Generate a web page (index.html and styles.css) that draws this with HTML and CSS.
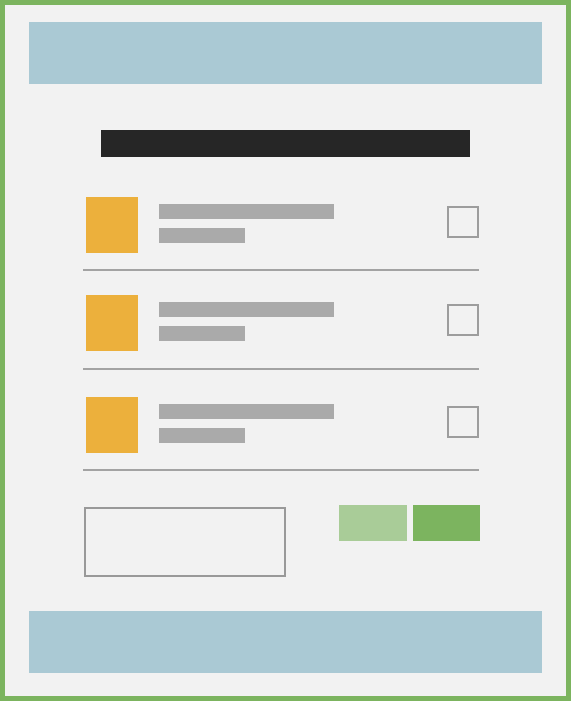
FILE: index.html
```html
<!DOCTYPE html>
<html lang="en">
    <head>
        <title>Checklist</title>
        <link rel="stylesheet" href="styles.css">
    </head>
    <body>
        <div class="frame">
            <div class="band"></div>

            <div class="title"></div>

            <div class="list">
                <div class="row">
                    <div class="thumb"></div>
                    <div class="lines">
                        <div class="line long"></div>
                        <div class="line short"></div>
                    </div>
                    <div class="check"></div>
                </div>
                <div class="row">
                    <div class="thumb"></div>
                    <div class="lines">
                        <div class="line long"></div>
                        <div class="line short"></div>
                    </div>
                    <div class="check"></div>
                </div>
                <div class="row">
                    <div class="thumb"></div>
                    <div class="lines">
                        <div class="line long"></div>
                        <div class="line short"></div>
                    </div>
                    <div class="check"></div>
                </div>
            </div>

            <div class="actions">
                <div class="field"></div>
                <div class="buttons">
                    <div class="button light"></div>
                    <div class="button dark"></div>
                </div>
            </div>

            <div class="band footer"></div>
        </div>
    </body>
</html>
```

FILE: styles.css
```css
body{
    margin: 0;
    background-color: #f2f2f2;
}
.frame{
    width: 571px;
    height: 701px;
    box-sizing: border-box;
    border: 5px solid #7cb45f;
    background-color: #f2f2f2;
    padding: 17px 24px 23px 24px;
    display: flex;
    flex-direction: column;
}
.band{
    height: 62px;
    background-color: #aac9d4;
}
.footer{
    margin-top: auto;
}
.title{
    margin: 46px 0 0 72px;
    width: 369px;
    height: 27px;
    background-color: #262626;
}
.list{
    margin: 15px 0 0 54px;
    width: 396px;
}
.row{
    display: flex;
    align-items: flex-start;
    padding: 25px 0 16px 3px;
    border-bottom: 2px solid #a3a3a3;
}
.row:nth-child(2){
    padding-top: 24px;
    padding-bottom: 17px;
}
.row:nth-child(3){
    padding-top: 27px;
}
.thumb{
    width: 52px;
    height: 56px;
    background-color: #ecb03c;
}
.lines{
    margin: 7px 0 0 21px;
    display: flex;
    flex-direction: column;
    gap: 9px;
}
.line{
    height: 15px;
    background-color: #aaaaaa;
}
.long{
    width: 175px;
}
.short{
    width: 86px;
}
.check{
    margin: 9px 0 0 auto;
    width: 32px;
    height: 32px;
    box-sizing: border-box;
    border: 2px solid #9d9d9d;
}
.actions{
    margin: 34px 0 0 55px;
    width: 396px;
    display: flex;
    align-items: flex-start;
}
.field{
    margin-top: 2px;
    width: 202px;
    height: 70px;
    box-sizing: border-box;
    border: 2px solid #999999;
}
.buttons{
    margin-left: auto;
    display: flex;
    gap: 6px;
}
.button{
    width: 67px;
    height: 36px;
}
.light{
    width: 68px;
    background-color: #a9cc98;
}
.dark{
    background-color: #7cb45f;
}
```
